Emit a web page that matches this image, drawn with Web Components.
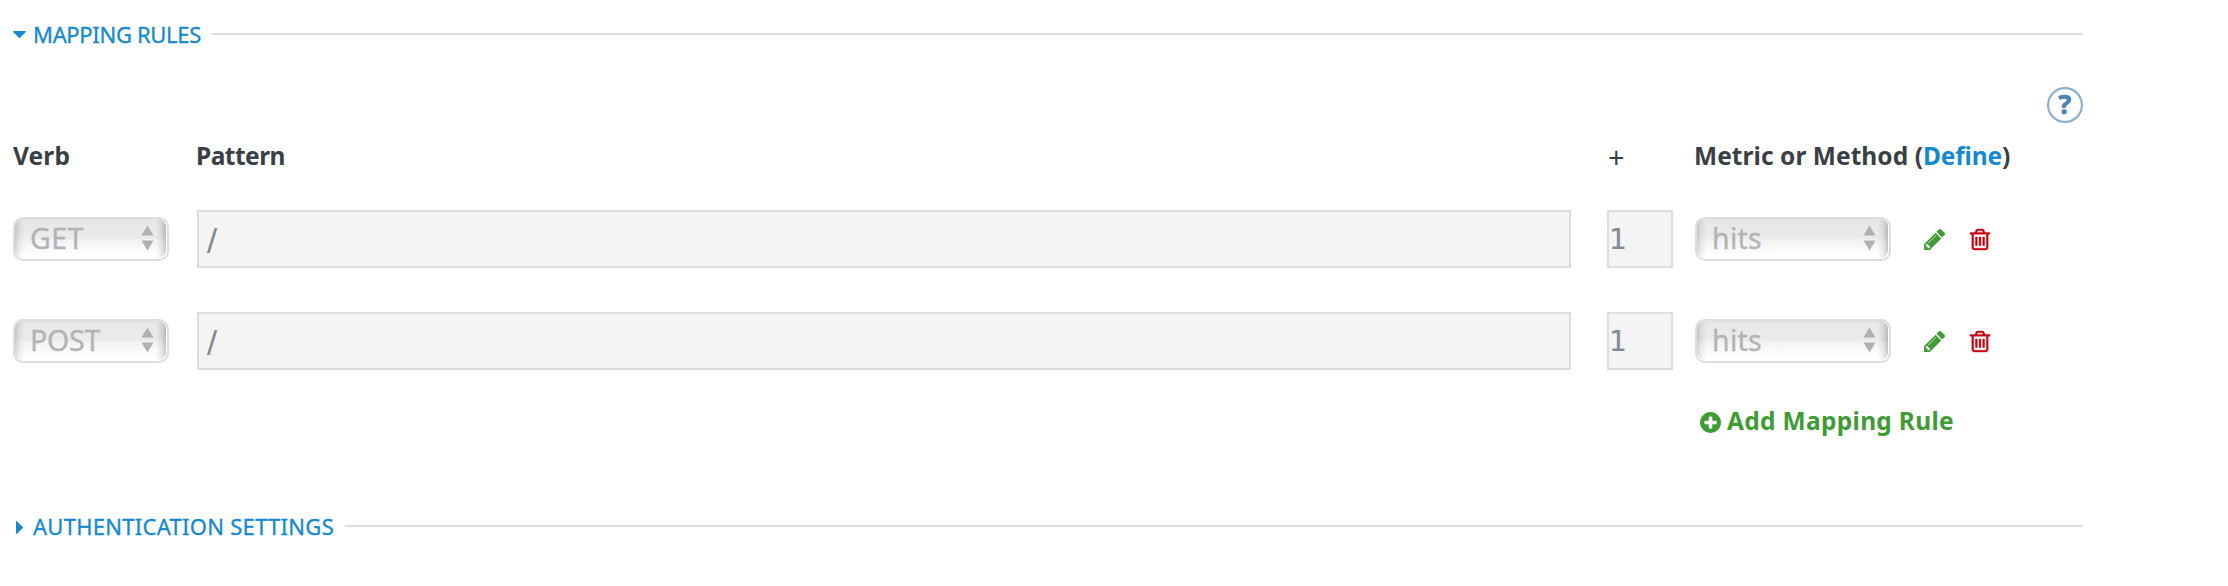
<!DOCTYPE html>
<html lang="en">
<head>
<meta charset="utf-8">
<title>Mapping Rules</title>
<style>
body { margin: 0; background: #fff; font-family: "Noto Sans", "Open Sans", sans-serif; color: #393f44; }
</style>
</head>
<body>
<api-settings></api-settings>
<script>
const define = (name, html, init) => {
  const t = document.createElement('template');
  t.innerHTML = html;
  customElements.define(name, class extends HTMLElement {
    connectedCallback() {
      if (this.shadowRoot) return;
      this.attachShadow({ mode: 'open' }).append(t.content.cloneNode(true));
      if (init) init(this, this.shadowRoot);
    }
  });
};

// A label tracked out or in to occupy a given advance width.
define('fit-text', `<style>
  :host { display: inline-block; white-space: pre; line-height: 30px; }
  span { display: inline-block; }
</style><span><slot></slot></span>`, (el, root) => {
  const s = root.querySelector('span');
  const want = +el.getAttribute('w');
  el.style.fontSize = el.getAttribute('size') + 'px';
  s.style.letterSpacing = (want - s.getBoundingClientRect().width) / el.textContent.length + 'px';
});

const icons = {
  pencil: ['128 149 1515 1515', 'M491 1536l91-91-235-235-91 91v107h128v128h107zm523-928q0-22-22-22-10 0-17 7l-542 542q-7 7-7 17 0 22 22 22 10 0 17-7l542-542q7-7 7-17zm-54-192l416 416-832 832h-416v-416zm683 96q0 53-37 90l-166 166-416-416 166-165q36-38 90-38 53 0 91 38l235 234q37 39 37 91z'],
  trash: ['192 128 1408 1536', 'M704 736v576q0 14-9 23t-23 9h-64q-14 0-23-9t-9-23v-576q0-14 9-23t23-9h64q14 0 23 9t9 23zm256 0v576q0 14-9 23t-23 9h-64q-14 0-23-9t-9-23v-576q0-14 9-23t23-9h64q14 0 23 9t9 23zm256 0v576q0 14-9 23t-23 9h-64q-14 0-23-9t-9-23v-576q0-14 9-23t23-9h64q14 0 23 9t9 23zm128 724v-948h-896v948q0 22 7 40.5t14.5 27 10.5 8.5h832q3 0 10.5-8.5t14.5-27 7-40.5zm-672-1076h448l-48-117q-7-9-17-11h-317q-10 2-17 11zm928 32v64q0 14-9 23t-23 9h-96v948q0 83-47 143.5t-113 60.5h-832q-66 0-113-58.5t-47-141.5v-952h-96q-14 0-23-9t-9-23v-64q0-14 9-23t23-9h309l70-167q15-37 54-63t79-26h320q40 0 79 26t54 63l70 167h309q14 0 23 9t9 23z'],
  plus: ['128 128 1536 1536', 'M1344 960v-128q0-26-19-45t-45-19h-256v-256q0-26-19-45t-45-19h-128q-26 0-45 19t-19 45v256h-256q-26 0-45 19t-19 45v128q0 26 19 45t45 19h256v256q0 26 19 45t45 19h128q26 0 45-19t19-45v-256h256q26 0 45-19t19-45zm320-64q0 209-103 385.5t-279.5 279.5-385.5 103-385.5-103-279.5-279.5-103-385.5 103-385.5 279.5-279.5 385.5-103 385.5 103 279.5 279.5 103 385.5z'],
  down: ['0 0 13 8', 'M.5 0h12q.8.4 0 1.2L7 6.8q-.5.5-1 0L.4 1.200Q-.2.4.5 0z'],
  right: ['0 0 8 13', 'M0 .5q.4-.8 1.200 0L6.800 6q.5.5 0 1L1.200 12.600Q.4 13.200 0 12.500z']
};
define('ui-icon', `<style>:host { display: block; } svg { display: block; width: 100%; height: 100%; fill: currentColor; overflow: visible; }
:host([name=trash]) path { stroke: currentColor; stroke-width: 28; }</style>
<svg preserveAspectRatio="none"><path/></svg>`, (el, root) => {
  const [box, d] = icons[el.getAttribute('name')];
  root.querySelector('svg').setAttribute('viewBox', box);
  root.querySelector('path').setAttribute('d', d);
});

define('section-legend', `<style>
  :host { display: flex; align-items: center; height: 30px; color: #1489cf; }
  .caret { width: 20px; flex: none; }
  .down { width: 13px; height: 8px; margin-top: 2px; }
  .right { width: 8px; height: 13px; margin: 2px 0 0 3px; }
  hr { flex: 1; border: 0; height: 2px; margin: 0 0 0 11px; background: #ddd; }
  slot { -webkit-text-stroke: .3px #1489cf; }
</style><div class="caret"></div><slot></slot><hr>`, (el, root) => {
  const c = document.createElement('ui-icon');
  c.className = el.getAttribute('caret');
  c.setAttribute('name', c.className);
  root.querySelector('.caret').append(c);
});

define('pop-select', `<style>
  :host { display: block; box-sizing: border-box; height: 44px; border: 2px solid #ddd; border-radius: 10px; background: #fff; color: #b3b3b3; -webkit-text-stroke: .3px #b3b3b3; }
  .face { display: flex; align-items: center; justify-content: space-between; box-sizing: border-box; height: 39px; margin-right: 1px; border-radius: 8px; padding: 0 12px 1px 15px;
    background: linear-gradient(90deg, rgba(0,0,0,.16), rgba(0,0,0,.06) 4px, transparent 10px, transparent calc(100% - 10px), rgba(0,0,0,.09) calc(100% - 4px), rgba(0,0,0,.21)),
      linear-gradient(#e3e3e3, #e8e8e8 4px, #ebebeb 50%, #f1f1f1 51%, #fff 92%); }
  svg { display: block; width: 13px; height: 26px; fill: #b0b0b0; }
</style><div class="face"><slot></slot><svg viewBox="0 0 13 26"><path d="M6.500 .5L12.500 10.500H.5zM.5 15.500h12l-6 10z"/></svg></div>`);

define('text-box', `<style>
  :host { display: flex; align-items: center; box-sizing: border-box; height: 58px; border: 2px solid #ddd; background: #f4f4f4; color: #7f8b95; font-family: "DejaVu Sans", sans-serif; font-size: 28px; -webkit-text-stroke: .2px #7f8b95; }
</style><slot></slot>`);

define('help-badge', `<style>
  :host { display: grid; place-items: center; box-sizing: border-box; width: 36px; height: 36px; border: 2px solid #8cadca; border-radius: 50%; color: #4b83b3; font: bold 27px/30px "Open Sans", sans-serif; -webkit-text-stroke: .7px #4b83b3; box-shadow: inset 0 0 1px #8cadca; }
  slot { display: block; margin-top: -2px; }
</style><slot></slot>`);

define('rule-row', `<style>
  :host { display: grid; grid-template-columns: 156px 28px 1374px 36px 66px 22px 196px 33px 21px 25px 20px; align-items: center; height: 58px; }
  .verb { grid-column: 1; } .pattern { grid-column: 3; } .amount { grid-column: 5; }
  .metric { grid-column: 7; } .pencil { grid-column: 9; } .trash { grid-column: 11; }
  .pattern { padding-left: 8px; font-size: 30px; }
  .pencil { height: 21px; color: #3f9c35; }
  .trash { height: 21px; color: #c8000f; }
</style>
<pop-select class="verb"><slot></slot></pop-select>
<text-box class="pattern"><span>/</span></text-box>
<text-box class="amount"><span>1</span></text-box>
<pop-select class="metric"><fit-text size="28.500" w="50">hits</fit-text></pop-select>
<ui-icon class="pencil" name="pencil"></ui-icon>
<ui-icon class="trash" name="trash"></ui-icon>`);

define('api-settings', `<style>
  :host { display: block; box-sizing: border-box; width: 2083px; height: 586px; padding: 19px 0 0 13px; }
  .help { display: flex; justify-content: flex-end; margin-top: 38px; }
  .heads { display: grid; grid-template-columns: 183px 1411px 87px 389px; height: 31px; align-items: center; margin: 17px 0 39px; font-weight: bold; }
  .heads .plus { font-weight: normal; padding: 2px 0 0 1px; }
  a { color: #1489cf; }
  rule-row + rule-row { margin-top: 44px; }
  .add { display: flex; align-items: center; height: 30px; margin: 36px 0 75px 1687px; color: #3f9c35; font-weight: bold; }
  .add ui-icon { width: 21px; height: 21px; margin: 2px 6px 0 0; }
</style>
<section-legend caret="down"><fit-text size="22" w="168">MAPPING RULES</fit-text></section-legend>
<div class="help"><help-badge>?</help-badge></div>
<div class="heads">
  <fit-text size="24.500" w="57">Verb</fit-text>
  <fit-text size="24.500" w="89">Pattern</fit-text>
  <fit-text class="plus" size="29" w="17">+</fit-text>
  <div><fit-text size="24.500" w="229">Metric or Method (</fit-text><a><fit-text size="24.500" w="79">Define</fit-text></a><fit-text size="24.500" w="8">)</fit-text></div>
</div>
<rule-row><fit-text size="28.500" w="54">GET</fit-text></rule-row>
<rule-row><fit-text size="28.500" w="70">POST</fit-text></rule-row>
<div class="add"><ui-icon name="plus"></ui-icon><fit-text size="24.500" w="227">Add Mapping Rule</fit-text></div>
<section-legend caret="right"><fit-text size="22" w="301">AUTHENTICATION SETTINGS</fit-text></section-legend>`);
</script>
</body>
</html>
